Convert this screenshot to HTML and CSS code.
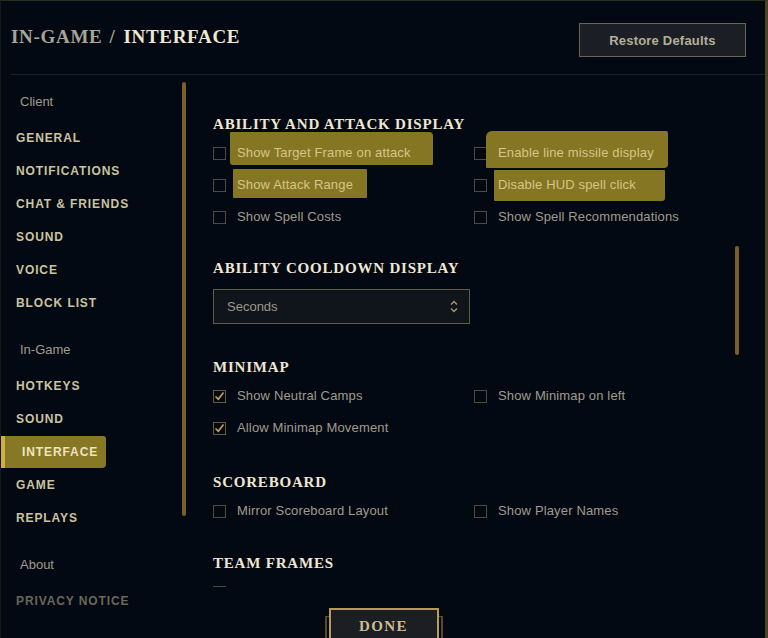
FILE: index.html
```html
<!DOCTYPE html>
<html lang="en">
<head>
<meta charset="utf-8">
<title>In-Game / Interface</title>
<link rel="stylesheet" href="styles.css">
</head>
<body>
<div class="app">
  <header class="header">
    <h1 class="title"><span class="crumb">IN-GAME</span><span class="sep">/</span><span class="current">INTERFACE</span></h1>
    <button class="restore">Restore Defaults</button>
  </header>
  <div class="body">
    <aside class="sidebar">
      <nav class="nav">
        <div class="group first">Client</div>
        <div class="item">GENERAL</div>
        <div class="item">NOTIFICATIONS</div>
        <div class="item">CHAT &amp; FRIENDS</div>
        <div class="item">SOUND</div>
        <div class="item">VOICE</div>
        <div class="item">BLOCK LIST</div>
        <div class="group">In-Game</div>
        <div class="item">HOTKEYS</div>
        <div class="item">SOUND</div>
        <div class="item"><span class="active">INTERFACE</span></div>
        <div class="item">GAME</div>
        <div class="item">REPLAYS</div>
        <div class="group">About</div>
        <div class="item muted">PRIVACY NOTICE</div>
      </nav>
      <div class="track side-track"></div>
    </aside>
    <main class="content">
      <div class="scroll">
        <section class="section s1">
          <h2 class="heading">ABILITY AND ATTACK DISPLAY</h2>
          <div class="grid">
            <div class="row"><span class="box"></span><span class="label"><span class="hl hl1">Show Target Frame on attack</span></span></div>
            <div class="row"><span class="box"></span><span class="label"><span class="hl hl3">Enable line missile display</span></span></div>
            <div class="row"><span class="box"></span><span class="label"><span class="hl hl2">Show Attack Range</span></span></div>
            <div class="row"><span class="box"></span><span class="label"><span class="hl hl4">Disable HUD spell click</span></span></div>
            <div class="row"><span class="box"></span><span class="label">Show Spell Costs</span></div>
            <div class="row"><span class="box"></span><span class="label">Show Spell Recommendations</span></div>
          </div>
        </section>
        <section class="section dd-section">
          <h2 class="heading">ABILITY COOLDOWN DISPLAY</h2>
          <div class="select">
            <span class="select-value">Seconds</span>
            <svg class="chev" width="8" height="13" viewBox="0 0 8 13"><path d="M1 4.5 L4 1.5 L7 4.5" fill="none" stroke="#a8966a" stroke-width="1.4"/><path d="M1 8.5 L4 11.5 L7 8.5" fill="none" stroke="#a8966a" stroke-width="1.4"/></svg>
          </div>
        </section>
        <section class="section s3">
          <h2 class="heading">MINIMAP</h2>
          <div class="grid">
            <div class="row"><span class="box checked"><svg width="11" height="11" viewBox="0 0 11 11"><path d="M1.5 5.5 L4.3 8.3 L9.5 1.5" fill="none" stroke="#c8a65a" stroke-width="1.6"/></svg></span><span class="label">Show Neutral Camps</span></div>
            <div class="row"><span class="box"></span><span class="label">Show Minimap on left</span></div>
            <div class="row"><span class="box checked"><svg width="11" height="11" viewBox="0 0 11 11"><path d="M1.5 5.5 L4.3 8.3 L9.5 1.5" fill="none" stroke="#c8a65a" stroke-width="1.6"/></svg></span><span class="label">Allow Minimap Movement</span></div>
          </div>
        </section>
        <section class="section s4">
          <h2 class="heading">SCOREBOARD</h2>
          <div class="grid">
            <div class="row"><span class="box"></span><span class="label">Mirror Scoreboard Layout</span></div>
            <div class="row"><span class="box"></span><span class="label">Show Player Names</span></div>
          </div>
        </section>
        <section class="section">
          <h2 class="heading">TEAM FRAMES</h2>
          <div class="grid">
            <div class="row"><span class="box"></span></div>
          </div>
        </section>
      </div>
      <div class="track main-track"></div>
    </main>
  </div>
  <div class="footer">
    <button class="done">DONE</button>
  </div>
</div>
</body>
</html>
```

FILE: styles.css
```css
* { box-sizing: border-box; }
html, body { margin: 0; padding: 0; background: #010a13; }
body { width: 768px; height: 638px; overflow: hidden; font-family: "Liberation Sans", Arial, sans-serif; }

.app {
  position: relative;
  width: 768px;
  height: 638px;
  background: #020912;
  border-top: 1px solid #2a2e1c;
  border-left: 1px solid #15191a;
  border-right: 3px solid #4f4122;
  display: flex;
  flex-direction: column;
  overflow: hidden;
}

.header {
  margin-left: 10px;
  padding: 22px 19px 17px 0;
  border-bottom: 1px solid #1c222a;
  display: flex;
  justify-content: space-between;
  align-items: flex-start;
}
.title {
  margin: 0;
  font-family: "Liberation Serif", "Times New Roman", serif;
  font-weight: 700;
  font-size: 19px;
  line-height: 28px;
  letter-spacing: 0.7px;
}
.crumb, .sep { color: #a8a496; }
.sep { margin: 0 8px 0 7px; }
.current { color: #f0e6d2; }

.restore {
  width: 167px;
  height: 34px;
  background: #1b1f25;
  border: 1.5px solid #6a6552;
  color: #b4ae98;
  font-family: "Liberation Sans", Arial, sans-serif;
  font-weight: 700;
  font-size: 13px;
  letter-spacing: 0.2px;
  padding: 0;
}

.body { display: flex; flex: 1; min-height: 0; }

.sidebar { display: flex; width: 185px; flex-shrink: 0; }
.nav { width: 181px; padding-top: 17px; display: flex; flex-direction: column; }
.group {
  height: 20px;
  line-height: 20px;
  padding-left: 19px;
  font-size: 13px;
  color: #a09b8c;
  margin: 20px 0 10px;
}
.group.first { margin-top: 0; }
.item {
  height: 33px;
  line-height: 33px;
  padding-left: 15px;
  font-weight: 700;
  font-size: 12px;
  letter-spacing: 0.9px;
  color: #cdc3a0;
}
.item.muted { color: #6a675b; }
.item .active {
  display: inline-block;
  margin-left: -15px;
  height: 32px;
  line-height: 32px;
  border-left: 4px solid #cfb045;
  padding: 0 8px 0 17px;
  background: #877826;
  color: #efe4bc;
  border-radius: 0 3px 4px 0;
}

.track {
  width: 4px;
  border-radius: 2px;
  background: #7b5e2b;
  flex-shrink: 0;
}
.side-track { margin-top: 7px; height: 434px; }
.main-track { margin-top: 171px; height: 109px; margin-right: 26px; }

.content { flex: 1; display: flex; min-width: 0; }
.scroll { flex: 1; height: 512px; padding: 39px 0 0 27px; overflow: hidden; }

.section { margin-bottom: 26px; }
.s1 { margin-bottom: 25px; }
.dd-section { margin-bottom: 33px; }
.s3 { margin-bottom: 28px; }
.heading {
  margin: 0 0 3px;
  height: 20px;
  line-height: 20px;
  font-family: "Liberation Serif", "Times New Roman", serif;
  font-weight: 700;
  font-size: 15px;
  letter-spacing: 0.8px;
  color: #f0e6d2;
}

.grid { display: grid; grid-template-columns: 261px 1fr; }
.row {
  height: 32px;
  display: flex;
  align-items: center;
  gap: 11px;
}
.box {
  width: 13px;
  height: 13px;
  border: 1.5px solid #4f4a39;
  flex-shrink: 0;
  display: flex;
  align-items: center;
  justify-content: center;
}
.box.checked { border-color: #675a3a; }
.label {
  font-size: 13px;
  line-height: 16px;
  letter-spacing: 0.15px;
  color: #a09b8c;
  white-space: nowrap;
}
.hl {
  position: relative;
  background: #857623;
  color: #d5c588;
}
.hl1 { padding: 13px 22px 5px 7px; margin-left: -7px; border-radius: 1px 4px 1px 3px; }
.hl2 { padding: 8px 14px 6px 4px; margin-left: -4px; border-radius: 1px; }
.hl3 { padding: 14px 14px 8px 12px; margin-left: -12px; border-radius: 6px 2px 4px 1px; }
.hl4 { padding: 7px 29px 9px 4px; margin-left: -4px; border-radius: 1px 1px 3px 1px; }

.select {
  width: 257px;
  height: 35px;
  margin-top: 11px;
  border: 1px solid #5f5c4b;
  background: #10151c;
  display: flex;
  align-items: center;
  justify-content: space-between;
  padding: 0 11px 0 13px;
}
.select-value { font-size: 13px; color: #9c988b; }

.footer {
  position: absolute;
  left: 0;
  right: 0;
  bottom: 0;
  display: flex;
  justify-content: center;
  padding-left: 1px;
}
.done {
  width: 110px;
  height: 32px;
  margin-bottom: -2px;
  background: #1b1f24;
  border: 2px solid #b99a59;
  border-bottom: none;
  color: #cdbe91;
  font-family: "Liberation Serif", "Times New Roman", serif;
  font-weight: 700;
  font-size: 15px;
  letter-spacing: 1.4px;
  padding: 2px 0 0;
  box-shadow: -3px 8px 0 -1px #020912, 3px 8px 0 -1px #020912, -4px 8px 0 0 #5a4a2a, 4px 8px 0 0 #5a4a2a;
}
```
